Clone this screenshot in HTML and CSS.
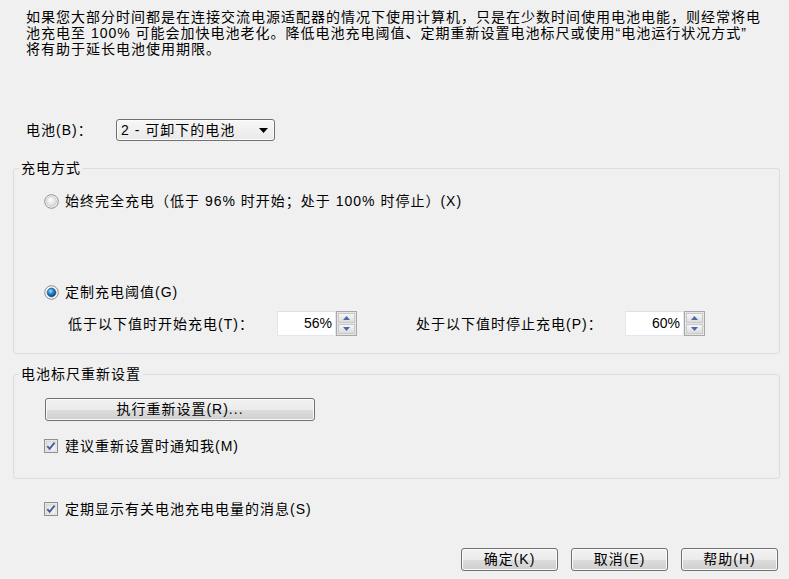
FILE: index.html
```html
<!DOCTYPE html>
<html lang="zh-CN">
<head>
<meta charset="utf-8">
<title>电池设置</title>
<link rel="stylesheet" href="styles.css">
</head>
<body>
<div class="intro">
  <div class="intro-line">如果您大部分时间都是在连接交流电源适配器的情况下使用计算机，只是在少数时间使用电池电能，则经常将电</div>
  <div class="intro-line">池充电至 100% 可能会加快电池老化。降低电池充电阈值、定期重新设置电池标尺或使用“电池运行状况方式”</div>
  <div class="intro-line">将有助于延长电池使用期限。</div>
</div>

<div class="battery-row">
  <span class="battery-label">电池(B)：</span>
  <div class="select">
    <span>2 - 可卸下的电池</span>
    <svg class="caret" width="9" height="5" viewBox="0 0 9 5"><path d="M0 0H9L4.5 5Z" fill="#000"/></svg>
  </div>
</div>

<fieldset class="group group-charge">
  <legend>充电方式</legend>
  <div class="opt opt-first">
    <svg class="radio" width="15" height="15" viewBox="0 0 15 15">
      <defs>
        <radialGradient id="rg1" cx="0.4" cy="0.35" r="0.7">
          <stop offset="0" stop-color="#ffffff"/>
          <stop offset="1" stop-color="#d4d4d4"/>
        </radialGradient>
      </defs>
      <circle cx="7.5" cy="7.5" r="6.8" fill="#f4f4f4" stroke="#8e8f8f" stroke-width="1"/>
      <circle cx="7.5" cy="7.5" r="5" fill="url(#rg1)" stroke="#c8c8c8" stroke-width="0.8"/>
    </svg>
    <span>始终完全充电（低于 96% 时开始；处于 100% 时停止）(X)</span>
  </div>
  <div class="opt opt-second">
    <svg class="radio" width="15" height="15" viewBox="0 0 15 15">
      <defs>
        <radialGradient id="rg2" cx="0.4" cy="0.35" r="0.65">
          <stop offset="0" stop-color="#a9e4ff"/>
          <stop offset="0.45" stop-color="#2a8bd0"/>
          <stop offset="1" stop-color="#063e73"/>
        </radialGradient>
      </defs>
      <circle cx="7.5" cy="7.5" r="6.8" fill="#f4f4f4" stroke="#8e8f8f" stroke-width="1"/>
      <circle cx="7.5" cy="7.5" r="4.4" fill="url(#rg2)" stroke="#1c4f7c" stroke-width="0.6"/>
    </svg>
    <span>定制充电阈值(G)</span>
  </div>
  <div class="spin-row">
    <span class="spin-label">低于以下值时开始充电(T)：</span>
    <div class="spin">
      <div class="spin-field">56%</div>
      <div class="spin-btns">
        <div class="sb"><svg width="7" height="4" viewBox="0 0 7 4"><path d="M0 4H7L3.5 0Z" fill="#4d68a6"/></svg></div>
        <div class="sb"><svg width="7" height="4" viewBox="0 0 7 4"><path d="M0 0H7L3.5 4Z" fill="#4d68a6"/></svg></div>
      </div>
    </div>
    <span class="spin-label spin-label-second">处于以下值时停止充电(P)：</span>
    <div class="spin">
      <div class="spin-field">60%</div>
      <div class="spin-btns">
        <div class="sb"><svg width="7" height="4" viewBox="0 0 7 4"><path d="M0 4H7L3.5 0Z" fill="#4d68a6"/></svg></div>
        <div class="sb"><svg width="7" height="4" viewBox="0 0 7 4"><path d="M0 0H7L3.5 4Z" fill="#4d68a6"/></svg></div>
      </div>
    </div>
  </div>
</fieldset>

<fieldset class="group group-gauge">
  <legend>电池标尺重新设置</legend>
  <div class="btn btn-reset">执行重新设置(R)...</div>
  <div class="opt opt-check">
    <svg class="check" width="14" height="14" viewBox="0 0 14 14">
      <defs>
        <linearGradient id="cg1" x1="0" y1="0" x2="1" y2="1">
          <stop offset="0" stop-color="#dcdcdc"/>
          <stop offset="1" stop-color="#f8f8f8"/>
        </linearGradient>
      </defs>
      <rect x="0.5" y="0.5" width="13" height="13" fill="#f4f4f4" stroke="#8e8f8f"/>
      <rect x="2" y="2" width="10" height="10" fill="url(#cg1)" stroke="#c6c6c6" stroke-width="0.6"/>
      <path d="M3.3 7.2L5.6 9.8L10.6 3.6" fill="none" stroke="#3f5aa0" stroke-width="1.8"/>
    </svg>
    <span>建议重新设置时通知我(M)</span>
  </div>
</fieldset>

<div class="opt opt-check opt-outer">
  <svg class="check" width="14" height="14" viewBox="0 0 14 14">
    <defs>
      <linearGradient id="cg2" x1="0" y1="0" x2="1" y2="1">
        <stop offset="0" stop-color="#dcdcdc"/>
        <stop offset="1" stop-color="#f8f8f8"/>
      </linearGradient>
    </defs>
    <rect x="0.5" y="0.5" width="13" height="13" fill="#f4f4f4" stroke="#8e8f8f"/>
    <rect x="2" y="2" width="10" height="10" fill="url(#cg2)" stroke="#c6c6c6" stroke-width="0.6"/>
    <path d="M3.3 7.2L5.6 9.8L10.6 3.6" fill="none" stroke="#3f5aa0" stroke-width="1.8"/>
  </svg>
  <span>定期显示有关电池充电电量的消息(S)</span>
</div>

<div class="actions">
  <div class="btn">确定(K)</div>
  <div class="btn">取消(E)</div>
  <div class="btn">帮助(H)</div>
</div>
</body>
</html>
```
FILE: styles.css
```css
* { box-sizing: border-box; }
html, body { margin: 0; padding: 0; }
body {
  width: 789px;
  height: 579px;
  overflow: hidden;
  background: #f0f0f0;
  color: #000;
  font-family: "Liberation Sans", "Noto Sans CJK SC", sans-serif;
  font-size: 14px;
  line-height: 16px;
  letter-spacing: 1px;
}
.intro {
  padding: 9px 0 0 26px;
  white-space: nowrap;
}
.intro-line { height: 16px; }
.battery-row {
  display: flex;
  align-items: center;
  height: 22px;
  margin-top: 62px;
  padding-left: 26px;
}
.battery-label { width: 90px; }
.select {
  width: 159px;
  height: 22px;
  border: 1px solid #707070;
  border-radius: 3px;
  background: linear-gradient(#f7f7f7, #e9e9e9);
  box-shadow: inset 0 0 0 1px #fcfcfc;
  display: flex;
  align-items: center;
  justify-content: space-between;
  padding: 0 6px 0 4px;
  white-space: nowrap;
}
.caret { display: block; }
.group {
  margin: 19px 0 0 13px;
  width: 767px;
  min-width: 0;
  padding: 0;
  border: 1px solid #d5dfe5;
  border-radius: 3px;
}
.group legend {
  margin-left: 5px;
  padding: 0 2px;
  line-height: 16px;
}
.group-charge { padding-bottom: 17px; }
.group-gauge { margin-top: 12px; padding-bottom: 24px; }
.opt {
  display: flex;
  align-items: center;
  gap: 6px;
  height: 16px;
  margin-left: 30px;
  white-space: nowrap;
}
.opt svg { display: block; flex: none; }
.opt-first { margin-top: 17px; }
.opt-second { margin-top: 75px; }
.opt-check { gap: 7px; margin-top: 17px; }
.opt-outer { margin: 22px 0 0 44px; }
.spin-row {
  display: flex;
  align-items: center;
  height: 25px;
  margin-top: 11px;
  padding-left: 54px;
  white-space: nowrap;
}
.spin-label { width: 209px; }
.spin-label-second { margin-left: 59px; }
.spin {
  display: flex;
  width: 80px;
  height: 25px;
}
.spin-field {
  width: 59px;
  height: 25px;
  background: #fff;
  border: 1px solid #e4e8ec;
  border-top-color: #dde1e6;
  text-align: right;
  padding-right: 3px;
  line-height: 23px;
  letter-spacing: 0;
}
.spin-btns {
  width: 21px;
  height: 25px;
  display: flex;
  flex-direction: column;
  gap: 1px;
  padding: 1px;
  border: 1px solid #a8a8a8;
  background: #e6e6e6;
}
.sb {
  flex: 1;
  display: flex;
  align-items: center;
  justify-content: center;
  background: linear-gradient(#f6f6f6, #dcdcdc);
  border: 1px solid #c9c9c9;
}
.sb svg { display: block; }
.btn {
  height: 23px;
  width: 97px;
  border: 1px solid #707070;
  border-radius: 3px;
  background: linear-gradient(#f2f2f2 0%, #ebebeb 50%, #dddddd 50%, #cfcfcf 100%);
  box-shadow: inset 0 0 0 1px #fbfbfb;
  text-align: center;
  line-height: 21px;
  white-space: nowrap;
}
.btn-reset {
  width: 270px;
  margin: 16px 0 0 31px;
}
.actions {
  display: flex;
  justify-content: flex-end;
  gap: 13px;
  margin-top: 31px;
  padding-right: 11px;
}
```
